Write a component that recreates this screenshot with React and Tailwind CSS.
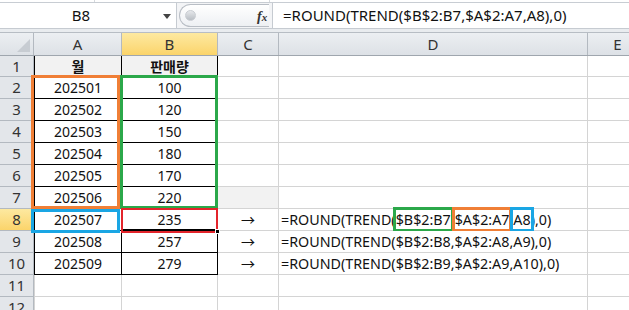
import React from 'react';

const cols = [
  { key: 'A', w: 87 },
  { key: 'B', w: 96 },
  { key: 'C', w: 61 },
  { key: 'D', w: 309 },
  { key: 'E', w: 60 },
];

const rows = [
  { n: 1, h: 21, A: '월', B: '판매량', head: true },
  { n: 2, A: '202501', B: '100' },
  { n: 3, A: '202502', B: '120' },
  { n: 4, A: '202503', B: '150' },
  { n: 5, A: '202504', B: '180' },
  { n: 6, A: '202505', B: '170' },
  { n: 7, A: '202506', B: '220', grayC: true },
  { n: 8, A: '202507', B: '235', C: '→', D: '=ROUND(TREND($B$2:B7,$A$2:A7,A8),0)', sel: true, marked: true },
  { n: 9, A: '202508', B: '257', C: '→', D: '=ROUND(TREND($B$2:B8,$A$2:A8,A9),0)' },
  { n: 10, A: '202509', B: '279', C: '→', D: '=ROUND(TREND($B$2:B9,$A$2:A9,A10),0)' },
  { n: 11 },
  { n: 12 },
];

// D8 shows the range references coloured as in edit mode
function FormulaD8() {
  return (
    <span>
      =ROUND(TREND(
      <span className="outline-[3px] outline-solid outline-[#2ba84a]">$B$2:B7</span>,
      <span className="outline-[3px] outline-solid outline-[#f07f36]">$A$2:A7</span>,
      <span className="outline-[3px] outline-solid outline-[#1aa6e4]">A8</span>
      ),0)
    </span>
  );
}

function Cell({ col, row }) {
  const inTable = (col.key === 'A' || col.key === 'B') && row.A;
  let bg = 'bg-white';
  if (row.head && inTable) bg = 'bg-[#f2f2f2]';
  if (row.grayC && col.key === 'C') bg = 'bg-[#f2f2f2]';

  let cls = 'border-b ' + (inTable ? 'border-b-black' : 'border-b-[#d4d4d4]');
  if (col.key === 'A') cls += ' border-l ' + (row.A ? 'border-l-black' : 'border-l-[#d4d4d4]');
  cls += ' border-r ' + (inTable ? 'border-r-black' : 'border-r-[#d4d4d4]');

  const content = col.key === 'D' && row.marked ? <FormulaD8 /> : row[col.key];
  const align = col.key === 'D' ? 'justify-start pl-[2px] text-[14.3px]' : 'justify-center';

  return (
    <div
      className={`flex items-center shrink-0 h-full whitespace-nowrap ${align} ${cls} ${bg} ${row.head ? 'font-bold' : ''}`}
      style={{ width: col.w + (col.key === 'A' ? 1 : 0) }}
    >
      {content}
    </div>
  );
}

export default function App() {
  return (
    <div className="w-[629px] h-[310px] overflow-hidden bg-white text-[#111]" style={{ fontFamily: '"Noto Sans", "Noto Sans CJK KR", sans-serif' }}>
      {/* ribbon remnant */}
      <div className="h-[3px] flex border-b border-[#c8cdd3] bg-white">
        <div className="w-[95px] border-r border-[#d6d9dd]" />
        <div className="w-[175px] border-r border-[#d6d9dd]" />
      </div>

      {/* formula bar */}
      <div className="h-[26px] flex bg-white border-b border-[#c6cbd1]">
        <div className="w-[177px] flex items-center relative border-r border-[#c6cbd1]">
          <div className="flex-1 text-center text-[15px] pr-[14px]">B8</div>
          <svg className="absolute right-[5px] top-[11px]" width="8" height="5" viewBox="0 0 8 5">
            <path d="M0 0h8L4 5z" fill="#444" />
          </svg>
        </div>
        <div className="w-[95px] flex items-center bg-[#f3f4f6] relative">
          <div className="absolute left-[2px] top-[1px] bottom-[1px] w-[90px] rounded-l-full border border-r-0 border-[#b9bec5] bg-gradient-to-b from-white to-[#eef0f3]" />
          <div className="absolute left-[8px] top-[7px] w-[11px] h-[11px] rounded-full bg-gradient-to-b from-[#e6e8eb] to-[#b9bec4] border border-[#c9cdd2]" />
          <div className="absolute left-[80px] top-[3px] text-[14px] italic font-bold text-[#333]" style={{ fontFamily: '"Liberation Serif", serif' }}>
            f<span className="text-[11px]">x</span>
          </div>
        </div>
        <div className="flex-1 flex items-center pl-[10px] border-l border-[#c6cbd1] text-[15px] text-[#111]">
          =ROUND(TREND($B$2:B7,$A$2:A7,A8),0)
        </div>
      </div>

      {/* gap strip */}
      <div className="h-[4px] bg-[#e9ecef] border-b border-[#b7bdc4]" />

      {/* sheet */}
      <div className="relative">
        <div className="flex h-[23px] border-b border-[#9fa6ae] bg-gradient-to-b from-[#eceff2] to-[#dde1e6] text-[15px] text-[#333]">
          <div className="w-[34px] shrink-0 border-r border-[#b3b9c0] relative">
            <svg className="absolute right-[3px] bottom-[3px]" width="13" height="13" viewBox="0 0 13 13">
              <path d="M13 0V13H0z" fill="#c7ccd2" />
            </svg>
          </div>
          {cols.map((c) => (
            <div
              key={c.key}
              className={`shrink-0 flex items-center justify-center border-r border-[#b3b9c0] ${c.key === 'B' ? 'bg-gradient-to-b from-[#fde9a0] to-[#fbd46a]' : ''}`}
              style={{ width: c.w + (c.key === 'A' ? 1 : 0) }}
            >
              {c.key}
            </div>
          ))}
        </div>

        {rows.map((r) => (
          <div key={r.n} className="flex text-[14px]" style={{ height: r.h || 22 }}>
            <div
              className={`w-[34px] shrink-0 flex items-center justify-center border-b border-r border-[#b3b9c0] text-[15px] text-[#333] ${r.sel ? 'bg-gradient-to-b from-[#fde9a0] to-[#fbd46a]' : 'bg-[#e3e6ea]'}`}
            >
              {r.n}
            </div>
            {cols.map((c) => (
              <Cell key={c.key} col={c} row={r} />
            ))}
          </div>
        ))}

        {/* range highlights */}
        <div className="absolute left-[31px] top-[42px] w-[89px] h-[134px] border-[3px] border-[#f07f36]" />
        <div className="absolute left-[120px] top-[42px] w-[98px] h-[134px] border-[3px] border-[#2ba84a]" />
        <div className="absolute left-[31px] top-[176px] w-[89px] h-[24px] border-[3px] border-[#1aa6e4]" />
        <div className="absolute left-[121px] top-[175px] w-[97px] h-[25px] border-[2px] border-[#e3242b]" />
        <div className="absolute left-[123px] top-[196px] w-[93px] h-[1px] bg-black" />
        <div className="absolute left-[215px] top-[196px] w-[5px] h-[5px] bg-black border border-white" />
      </div>
    </div>
  );
}
